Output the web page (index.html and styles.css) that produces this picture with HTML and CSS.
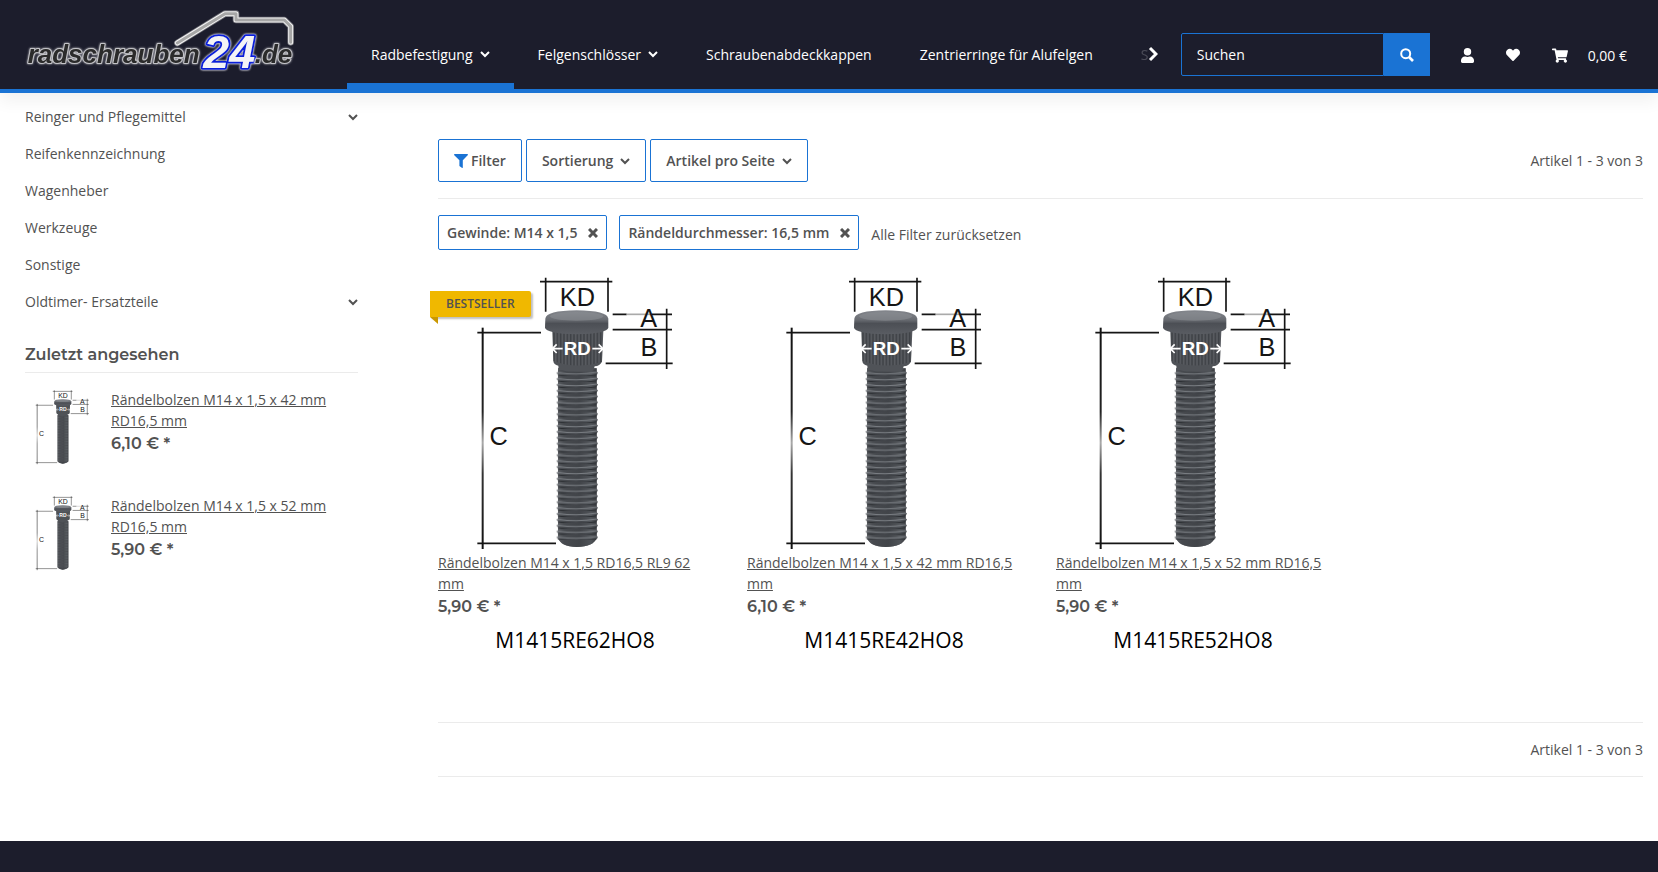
FILE: index.html
```html
<!DOCTYPE html>
<html lang="de">
<head>
<meta charset="utf-8">
<meta name="viewport" content="width=device-width, initial-scale=1">
<title>radschrauben24.de</title>
<link rel="stylesheet" href="styles.css">
</head>
<body>
<svg class="sprite" aria-hidden="true">
  <defs>
    <linearGradient id="steel" x1="0" x2="1" y1="0" y2="0">
      <stop offset="0" stop-color="#63666b"/><stop offset=".15" stop-color="#4a4d52"/>
      <stop offset=".55" stop-color="#42454a"/><stop offset=".85" stop-color="#565a5f"/><stop offset="1" stop-color="#3c3e42"/>
    </linearGradient>
    <linearGradient id="cap" x1="0" x2="0" y1="0" y2="1">
      <stop offset="0" stop-color="#85888e"/><stop offset=".4" stop-color="#686b71"/>
      <stop offset=".55" stop-color="#4c4f55"/><stop offset="1" stop-color="#5a5d63"/>
    </linearGradient>
    <linearGradient id="fade" gradientUnits="userSpaceOnUse" x1="0" x2="0" y1="188" y2="852">
      <stop offset="0" stop-color="#111"/><stop offset=".38" stop-color="#222"/><stop offset=".52" stop-color="#aaa"/>
      <stop offset=".66" stop-color="#333"/><stop offset="1" stop-color="#111"/>
    </linearGradient>
    <pattern id="thread" width="124" height="17.6" x="410" y="316" patternUnits="userSpaceOnUse">
      <path d="M5 4 Q62 12 119 2 L124 8 L119 14 Q62 22 5 14 L0 9Z" fill="url(#steel)"/>
      <path d="M3 7 Q62 16 121 6" fill="none" stroke="#7a7e83" stroke-width="3"/>
      <path d="M5 15 Q62 23 119 14" fill="none" stroke="#2b2e32" stroke-width="3"/>
    </pattern>
    <pattern id="knurl" width="10" height="70" patternUnits="userSpaceOnUse">
      <path d="M2 0V70" stroke="#393c40" stroke-width="4"/>
      <path d="M7 0V70" stroke="#65686d" stroke-width="2"/>
    </pattern>
  </defs>
  <symbol id="bolt" viewBox="54 24 837 837">
    <g fill="none" stroke="#151515" stroke-width="5">
      <path d="M360 50H577M377 38V140M564 38V140M172 203H363M172 835H408M578 148H620M695 148H756M578 194H756M557 295H758M740 131V312"/>
      <path d="M620 148H695" stroke="#aaa"/>
      <path d="M188 188V852" stroke="url(#fade)" stroke-width="6"/>
    </g>
    <path d="M414 310H530V818Q522 844 470 846Q422 844 414 818Z" fill="#3f4246"/>
    <path d="M414 310H530V818Q522 844 470 846Q422 844 414 818Z" fill="url(#steel)" opacity=".7"/>
    <path d="M410 316H534V825H410Z" fill="url(#thread)"/>
    <path d="M397 198H550L546 290Q540 302 524 304L520 317Q470 325 416 315L415 302Q401 299 400 288Z" fill="#505358"/>
    <path d="M399 202H549L546 290Q470 314 400 288Z" fill="url(#knurl)" opacity=".75"/>
    <path d="M376 161Q378 137 470 136Q562 137 565 161V188Q562 205 470 208Q378 205 375 188Z" fill="url(#cap)"/>
    <ellipse cx="470" cy="154" rx="80" ry="13" fill="#8a8d93" opacity=".6"/>
    <g class="dim" text-anchor="middle">
      <text x="472" y="122">KD</text><text x="686" y="187">A</text><text x="687" y="274">B</text><text x="236" y="539">C</text>
    </g>
    <text class="dim-rd" x="472" y="270" text-anchor="middle">RD</text>
    <path d="M428 251H397M410 238L397 251L410 264M517 251H549M536 238L549 251L536 264" fill="none" stroke="#fff" stroke-width="5"/>
  </symbol>
  <symbol id="chevron" viewBox="0 0 10 10"><path d="M1 3L5 7L9 3" fill="none" stroke="currentColor" stroke-width="2"/></symbol>
  <symbol id="times" viewBox="0 0 10 10"><path d="M1 1L9 9M9 1L1 9" fill="none" stroke="currentColor" stroke-width="3"/></symbol>
</svg>

<header class="header">
  <a class="logo" href="#" aria-label="radschrauben24.de">
    <svg viewBox="78 24 810 201">
      <g fill="none" stroke-linejoin="round" stroke-linecap="round">
        <path d="M532 129L675 41H708V60H853L872 79V127" stroke="#6c6c74" stroke-width="20"/>
        <path d="M532 129L675 41H708V60H853L872 79V127" stroke="#f2f2f2" stroke-width="15"/>
        <path d="M532 129L675 41H708V60H853L872 79V127" stroke="#a6a6a6" stroke-width="9"/>
      </g>
      <text class="logo-word" x="83" y="189">radschrauben</text>
      <text class="logo-num" x="610" y="205">24</text>
      <text class="logo-word" x="764" y="189">.de</text>
    </svg>
  </a>
  <nav class="nav" aria-label="Kategorien">
    <div class="nav-list">
      <a class="nav-item nav-active" href="#">Radbefestigung <svg class="chev"><use href="#chevron"/></svg></a>
      <a class="nav-item" href="#">Felgenschlösser <svg class="chev"><use href="#chevron"/></svg></a>
      <a class="nav-item" href="#">Schraubenabdeckkappen</a>
      <a class="nav-item" href="#">Zentrierringe für Alufelgen</a>
      <a class="nav-item nav-faded" href="#">S</a>
    </div>
    <button class="nav-next" aria-label="Weiter"><svg viewBox="0 0 10 16"><path d="M2 2L8 8L2 14" fill="none" stroke="currentColor" stroke-width="3"/></svg></button>
  </nav>
  <form class="search">
    <input type="text" placeholder="Suchen" aria-label="Suchen">
    <button type="button" aria-label="Suche starten"><svg viewBox="0 0 14 14"><circle cx="5.7" cy="5.7" r="4.5" fill="none" stroke="currentColor" stroke-width="2"/><path d="M9 9L13 13" stroke="currentColor" stroke-width="2.6"/></svg></button>
  </form>
  <div class="tools">
    <a href="#" aria-label="Konto"><svg class="ic-user" viewBox="0 0 448 512"><path fill="currentColor" d="M224 256a128 128 0 1 0 0-256 128 128 0 1 0 0 256zm90 32h-17a174 174 0 0 1-146 0h-17C60 288 0 348 0 422v42c0 27 21 48 48 48h352c27 0 48-21 48-48v-42c0-74-60-134-134-134z"/></svg></a>
    <a href="#" aria-label="Wunschzettel"><svg class="ic-heart" viewBox="0 0 512 512"><path fill="currentColor" d="M462 62c-55-46-136-38-186 14l-20 20-20-20C186 24 105 16 50 62c-63 53-66 149-10 207l193 200c13 13 33 13 46 0l193-200c56-58 53-154-10-207z"/></svg></a>
    <a class="cart" href="#" aria-label="Warenkorb 0,00 €"><svg class="ic-cart" viewBox="0 0 576 512"><path fill="currentColor" d="M528 301l47-208c4-15-8-29-23-29H159l-9-45C148 8 138 0 126 0H24C11 0 0 11 0 24v16c0 13 11 24 24 24h70l70 343a56 56 0 1 0 67 9h210a56 56 0 1 0 64-10l5-25c4-15-8-29-23-29H218l-7-32h294c11 0 21-8 23-19z"/></svg><span>0,00 €</span></a>
  </div>
</header>

<main class="page">
  <aside class="sidebar">
    <ul class="cats">
      <li><a href="#">Reinger und Pflegemittel <svg class="chev"><use href="#chevron"/></svg></a></li>
      <li><a href="#">Reifenkennzeichnung</a></li>
      <li><a href="#">Wagenheber</a></li>
      <li><a href="#">Werkzeuge</a></li>
      <li><a href="#">Sonstige</a></li>
      <li><a href="#">Oldtimer- Ersatzteile <svg class="chev"><use href="#chevron"/></svg></a></li>
    </ul>
    <h2 class="side-title">Zuletzt angesehen</h2>
    <div class="recent">
      <article class="mini">
        <svg class="mini-img"><use href="#bolt"/></svg>
        <div><a href="#">Rändelbolzen M14 x 1,5 x 42 mm RD16,5 mm</a><p class="price">6,10 € *</p></div>
      </article>
      <article class="mini">
        <svg class="mini-img"><use href="#bolt"/></svg>
        <div><a href="#">Rändelbolzen M14 x 1,5 x 52 mm RD16,5 mm</a><p class="price">5,90 € *</p></div>
      </article>
    </div>
  </aside>

  <section class="content">
    <div class="toolbar">
      <button class="btn"><svg class="ic-filter" viewBox="0 0 14 14"><path fill="#1a73d4" d="M.6 0H13.4Q14.3.6 13.7 1.3L8.8 6.2V13.4Q8.5 14.2 7.8 13.8L5.4 12V6.2L.3 1.3Q-.3.6.6 0Z"/></svg>Filter</button>
      <button class="btn">Sortierung <svg class="chev"><use href="#chevron"/></svg></button>
      <button class="btn">Artikel pro Seite <svg class="chev"><use href="#chevron"/></svg></button>
      <span class="count">Artikel 1 - 3 von 3</span>
    </div>
    <div class="chips">
      <button class="chip">Gewinde: M14 x 1,5 <svg class="x"><use href="#times"/></svg></button>
      <button class="chip">Rändeldurchmesser: 16,5 mm <svg class="x"><use href="#times"/></svg></button>
      <a class="reset" href="#">Alle Filter zurücksetzen</a>
    </div>
    <div class="products">
      <article class="product">
        <span class="ribbon">BESTSELLER</span>
        <svg class="product-img" viewBox="0 0 279 279"><use href="#bolt"/></svg>
        <a href="#">Rändelbolzen M14 x 1,5 RD16,5 RL9 62 mm</a>
        <p class="price">5,90 € *</p>
        <p class="code">M1415RE62HO8</p>
      </article>
      <article class="product">
        <svg class="product-img" viewBox="0 0 279 279"><use href="#bolt"/></svg>
        <a href="#">Rändelbolzen M14 x 1,5 x 42 mm RD16,5 mm</a>
        <p class="price">6,10 € *</p>
        <p class="code">M1415RE42HO8</p>
      </article>
      <article class="product">
        <svg class="product-img" viewBox="0 0 279 279"><use href="#bolt"/></svg>
        <a href="#">Rändelbolzen M14 x 1,5 x 52 mm RD16,5 mm</a>
        <p class="price">5,90 € *</p>
        <p class="code">M1415RE52HO8</p>
      </article>
    </div>
    <div class="bottom"><span class="count">Artikel 1 - 3 von 3</span></div>
  </section>
</main>
<footer class="footer"></footer>
</body>
</html>
```
FILE: styles.css
```css
* { box-sizing: border-box; }
body {
  margin: 0;
  min-height: 100vh;
  display: flex;
  flex-direction: column;
  font: 14px/21px "Open Sans", sans-serif;
  color: #525252;
  background: #fff;
}
a { color: inherit; }
p, h2, ul { margin: 0; padding: 0; }
button, input { font: inherit; color: inherit; }
svg { display: block; flex: none; }
.sprite { position: absolute; width: 0; height: 0; }
.chev { width: 10px; height: 10px; }

.header {
  display: flex;
  height: 93px;
  padding: 0 31px 0 26px;
  background: #1c1d2c;
  border-bottom: 4px solid #1a73d4;
  box-shadow: 0 8px 16px rgba(0, 0, 0, .06);
  color: #fff;
}
.logo { width: 270px; margin: 8px 51px 0 0; flex: none; }
.logo svg { width: 100%; height: 67px; overflow: visible; }
.logo-word {
  font: italic bold 78px "Liberation Sans", sans-serif;
  fill: #2b2b2b;
  stroke: #c4c4c8;
  stroke-width: 6px;
  stroke-linejoin: round;
  paint-order: stroke;
  filter: drop-shadow(0 0 3px #c8c8cc);
}
.logo-num {
  font: italic bold 140px "Liberation Sans", sans-serif;
  fill: #f4f4f6;
  stroke: #0a1fd8;
  stroke-width: 11px;
  stroke-linejoin: round;
  paint-order: stroke;
  filter: drop-shadow(0 0 3px #d8d8e4) drop-shadow(0 0 2px #d8d8e4);
}

.nav { display: flex; flex: 1; min-width: 0; margin-right: 23px; padding-top: 19px; }
.nav-list { display: flex; flex: 1; min-width: 0; overflow: hidden; }
.nav-item {
  display: flex;
  align-items: center;
  gap: 7px;
  flex: none;
  padding: 0 24px;
  text-decoration: none;
  border: solid transparent;
  border-width: 6px 0;
}
.nav-active { border-bottom-color: #1a73d4; }
.nav-faded { opacity: .2; padding-right: 0; }
.nav-next { border: 0; background: none; padding: 0; }
.nav-next svg { width: 10px; height: 16px; }

.search { display: flex; width: 249px; height: 43px; margin-top: 33px; flex: none; }
.search input {
  flex: 1;
  min-width: 0;
  padding: 0 15px;
  background: transparent;
  border: 1px solid #1a73d4;
  border-radius: 2px 0 0 2px;
}
.search input::placeholder { color: #fff; opacity: 1; }
.search button { width: 46px; padding: 0 16px; border: 0; background: #1a73d4; color: #fff; }
.search svg { width: 14px; height: 14px; }

.tools { display: flex; align-items: center; gap: 32px; padding-top: 21px; margin-left: 31px; }
.tools a { text-decoration: none; }
.cart { display: flex; align-items: center; gap: 20px; }
.ic-user { width: 13px; height: 15px; }
.ic-heart { width: 14px; height: 14px; }
.ic-cart { width: 16px; height: 15px; }

.page { display: flex; gap: 80px; padding: 0 15px 64px 25px; }
.sidebar { width: 333px; flex: none; padding-top: 5px; }
.cats { list-style: none; }
.cats a {
  display: flex;
  justify-content: space-between;
  align-items: center;
  padding: 8px 0;
  text-decoration: none;
}
.side-title {
  margin: 24px 0 16px;
  padding-bottom: 7px;
  border-bottom: 1px solid #ebebeb;
  font: 600 16px/21px Montserrat, Inter, sans-serif;
}
.recent { display: grid; gap: 30px; }
.mini { display: flex; gap: 10px; min-height: 76px; }
.mini-img { width: 76px; height: 76px; }
.mini a { display: block; }
.price { margin-top: 1px; font: 600 16px/24px Montserrat, Inter, sans-serif; }

.content { flex: 1; min-width: 0; padding-top: 46px; }
.toolbar {
  display: flex;
  align-items: center;
  gap: 4px;
  padding-bottom: 16px;
  border-bottom: 1px solid #ebebeb;
}
.btn, .chip {
  display: flex;
  align-items: center;
  gap: 7px;
  height: 43px;
  padding: 0 15px;
  border: 1px solid #1a73d4;
  border-radius: 2px;
  background: #fff;
  font-weight: 600;
}
.ic-filter { width: 14px; height: 14px; margin-right: -4px; }
.count { margin-left: auto; }
.chips { display: flex; align-items: center; gap: 12px; padding: 16px 0 23px; }
.chip { height: 35px; padding: 0 8px; gap: 11px; }
.x { width: 10px; height: 10px; }
.reset { text-decoration: none; padding-top: 4px; }

.products { display: grid; grid-template-columns: repeat(auto-fill, 279px); gap: 30px; }
.product { position: relative; }
.product-img { width: 100%; height: auto; }
.product a { display: block; }
.code {
  padding: 6px 5px 0 0;
  font-size: 21px;
  line-height: 30px;
  color: #000;
  text-align: center;
}
.ribbon {
  position: absolute;
  top: 18px;
  left: -8px;
  padding: 0 16px;
  font-size: 12px;
  line-height: 26px;
  font-weight: 600;
  background: #f0b800;
  border-radius: 0 2px 2px 0;
  box-shadow: 2px 2px 2px rgba(0, 0, 0, .25);
}
.ribbon::after {
  content: "";
  position: absolute;
  left: 0;
  top: 100%;
  border: solid transparent;
  border-width: 0 8px 7px 0;
  border-right-color: #c99700;
}
.dim { font: 76px "Liberation Sans", sans-serif; fill: #151515; }
.dim-rd { font: bold 56px "Liberation Sans", sans-serif; fill: #fff; }
.bottom {
  display: flex;
  margin-top: 67px;
  padding: 16px 0;
  border: solid #ebebeb;
  border-width: 1px 0;
}
.footer { flex: 1; min-height: 32px; background: #1c1d2c; }
```
